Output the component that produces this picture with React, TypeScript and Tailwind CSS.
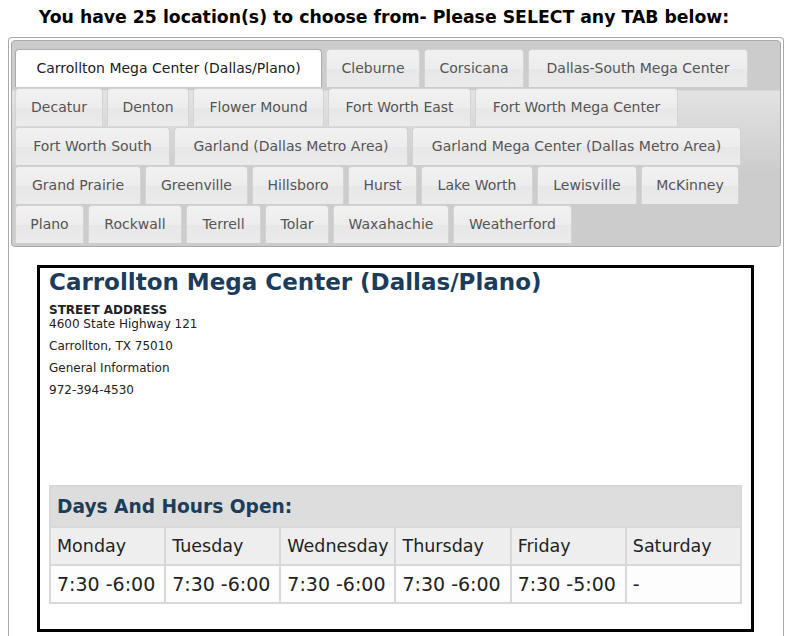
import React from 'react';

// tab labels with their widths as measured on the strip
const TABS = [
  { name: 'Carrollton Mega Center (Dallas/Plano)', w: 'w-[307px]' },
  { name: 'Cleburne', w: 'w-[94px]' },
  { name: 'Corsicana', w: 'w-[100px]' },
  { name: 'Dallas-South Mega Center', w: 'w-[220px]' },
  { name: 'Decatur', w: 'w-[88px]' },
  { name: 'Denton', w: 'w-[82px]' },
  { name: 'Flower Mound', w: 'w-[131px]' },
  { name: 'Fort Worth East', w: 'w-[143px]' },
  { name: 'Fort Worth Mega Center', w: 'w-[203px]' },
  { name: 'Fort Worth South', w: 'w-[155px]' },
  { name: 'Garland (Dallas Metro Area)', w: 'w-[234px]' },
  { name: 'Garland Mega Center (Dallas Metro Area)', w: 'w-[329px]' },
  { name: 'Grand Prairie', w: 'w-[126px]' },
  { name: 'Greenville', w: 'w-[103px]' },
  { name: 'Hillsboro', w: 'w-[92px]' },
  { name: 'Hurst', w: 'w-[69px]' },
  { name: 'Lake Worth', w: 'w-[112px]' },
  { name: 'Lewisville', w: 'w-[100px]' },
  { name: 'McKinney', w: 'w-[98px]' },
  { name: 'Plano', w: 'w-[69px]' },
  { name: 'Rockwall', w: 'w-[94px]' },
  { name: 'Terrell', w: 'w-[75px]' },
  { name: 'Tolar', w: 'w-[64px]' },
  { name: 'Waxahachie', w: 'w-[116px]' },
  { name: 'Weatherford', w: 'w-[119px]' },
];

const HOURS = [
  { day: 'Monday', time: '7:30 -6:00' },
  { day: 'Tuesday', time: '7:30 -6:00' },
  { day: 'Wednesday', time: '7:30 -6:00' },
  { day: 'Thursday', time: '7:30 -6:00' },
  { day: 'Friday', time: '7:30 -5:00' },
  { day: 'Saturday', time: '-' },
];

const App: React.FC = () => {
  return (
    <div className="w-[792px] h-[636px] overflow-hidden bg-white font-['DejaVu_Sans',Verdana,sans-serif] text-[#222]">
      <h2 className="h-[37px] pt-[7px] pr-[24px] text-center text-[17.3px] leading-[21px] font-bold text-black">
        You have 25 location(s) to choose from- Please SELECT any TAB below:
      </h2>

      <div className="mx-2 h-[600px] rounded-t-[4px] border border-b-0 border-[#aaaaaa] px-[2px] pt-[2px]">
        {/* Tab strip */}
        <div className="flex flex-wrap gap-x-[4px] gap-y-px rounded-[4px] border border-[#aaaaaa] bg-[linear-gradient(to_bottom,#cccccc_0,#cccccc_49px,#e3e3e3_50px,#cccccc_132px,#cccccc_100%)] px-[3px] pt-[8px] pb-[3px]">
          {TABS.map((tab, i) => (
            <div
              key={tab.name}
              className={`${tab.w} ${
                i === 0
                  ? 'flex h-[38px] items-center justify-center whitespace-nowrap rounded-t-[4px] border border-b-0 border-[#aaaaaa] bg-white text-[14px] text-[#212121]'
                  : 'flex h-[38px] items-center justify-center whitespace-nowrap rounded-t-[4px] border border-b-0 border-[#d3d3d3] bg-[linear-gradient(to_bottom,#f1f1f1_0%,#ededed_50%,#e7e7e7_51%,#ebebeb_100%)] text-[14px] text-[#555555]'
              }`}
            >
              {tab.name}
            </div>
          ))}
        </div>

        {/* Panel */}
        <div className="pl-[26px] pr-[27px] pt-[18px]">
          <div className="h-[367px] border-[3px] border-black px-[9px]">
            <h1 className="text-[23px] leading-[28px] font-bold text-[#1b3d5b]">
              Carrollton Mega Center (Dallas/Plano)
            </h1>
            <div className="mt-[7px] text-[12px] leading-[14px]">
              <p className="font-bold">STREET ADDRESS</p>
              <p className="mb-[8px]">4600 State Highway 121</p>
              <p className="mb-[8px]">Carrollton, TX 75010</p>
              <p className="mb-[8px]">General Information</p>
              <p>972-394-4530</p>
            </div>

            <table className="mt-[88px] w-full table-fixed border-collapse border-2 border-[#d8d8d8]">
              <thead>
                <tr>
                  <th
                    colSpan={6}
                    className="h-[41px] bg-[#dddddd] px-[6px] text-left text-[18.6px] font-bold text-[#1b3d5b]"
                  >
                    Days And Hours Open:
                  </th>
                </tr>
              </thead>
              <tbody>
                <tr>
                  {HOURS.map((h) => (
                    <td
                      key={h.day}
                      className="h-[38px] border-2 border-[#d8d8d8] bg-[#eeeeee] px-[6px] text-[17.5px]"
                    >
                      {h.day}
                    </td>
                  ))}
                </tr>
                <tr>
                  {HOURS.map((h) => (
                    <td
                      key={h.day}
                      className="h-[38px] border-2 border-[#d8d8d8] bg-[#fdfdfd] px-[6px] text-[19px]"
                    >
                      {h.time}
                    </td>
                  ))}
                </tr>
              </tbody>
            </table>
          </div>
        </div>
      </div>
    </div>
  );
};

export default App;
